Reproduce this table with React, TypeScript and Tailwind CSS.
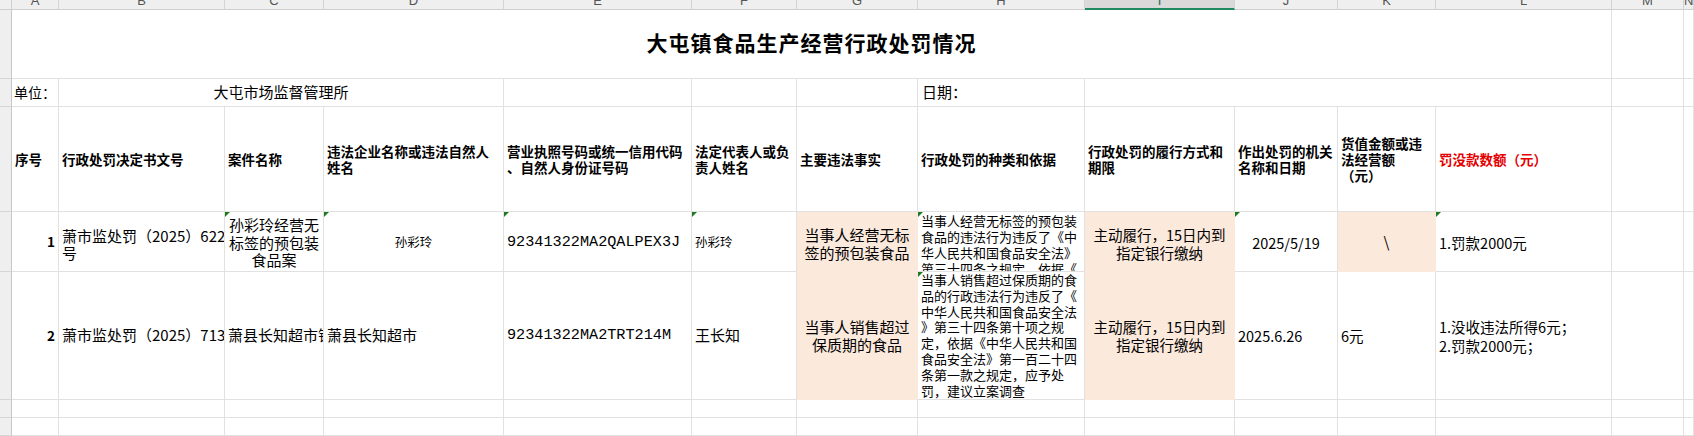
import React from "react";

const LINE = "border-[#e1e1e1]";
const PEACH = "bg-[#fbe9dc] border-[#fbe9dc]";

function Tri() {
  return (
    <span className="absolute left-0 top-0 h-0 w-0 border-r-[5px] border-t-[5px] border-r-transparent border-t-[#1f7a1f]" />
  );
}

function Cell({
  className = "",
  tri = false,
  children,
}: {
  className?: string;
  tri?: boolean;
  children?: React.ReactNode;
}) {
  return (
    <div className={`relative flex overflow-hidden border-b border-r ${LINE} ${className}`}>
      {tri && <Tri />}
      {children}
    </div>
  );
}

function Lines({ lines }: { lines: string[] }) {
  return (
    <div>
      {lines.map((l, i) => (
        <div key={i} className="whitespace-nowrap">
          {l}
        </div>
      ))}
    </div>
  );
}

function RowHead() {
  return <div className="border-b border-r border-b-[#d6d6d6] border-r-[#c8c8c8] bg-[#efefef]" />;
}

const letters = ["A", "B", "C", "D", "E", "F", "G", "H", "I", "J", "K", "L", "M", "N"];

function Th({ lines, red = false }: { lines: string[]; red?: boolean }) {
  return (
    <Cell className={`items-center pl-[3px] text-[13.5px] font-bold leading-4 ${red ? "text-[#e50000]" : "text-black"}`}>
      <Lines lines={lines} />
    </Cell>
  );
}

export default function App() {
  return (
    <div className="h-[436px] w-[1694px] overflow-hidden bg-white font-['Noto_Sans_CJK_SC',sans-serif] text-black">
      <div className="grid grid-cols-[12px_47px_166px_99px_180px_188px_105px_121px_167px_150px_103px_98px_176px_72px_10px] grid-rows-[10px_69px_28px_105px_60px_128px_18px_18px]">
        {/* column letters */}
        <div className="border-b border-r border-b-[#cfcfcf] border-r-[#cfcfcf] bg-[#efefef]" />
        {letters.map((l) => (
          <div
            key={l}
            className={`relative overflow-hidden border-r border-r-[#d4d4d4] ${
              l === "I" ? "border-b-2 border-b-[#1f8a5e] bg-[#d9d9d9] text-[#1f6e4c]" : "border-b border-b-[#cfcfcf] bg-[#efefef] text-[#555]"
            }`}
          >
            <div className="-mt-[6px] text-center font-['Liberation_Sans',sans-serif] text-[13px] leading-[13px]">{l}</div>
          </div>
        ))}

        {/* row 1: title */}
        <RowHead />
        <Cell className="col-span-12 items-center justify-center pb-[2px] text-[21px] font-bold tracking-[1px]">
          大屯镇食品生产经营行政处罚情况
        </Cell>
        <Cell />
        <Cell />

        {/* row 2 */}
        <RowHead />
        <Cell className="items-center whitespace-nowrap pl-[2px] text-[14px]">单位：</Cell>
        <Cell className="col-span-3 items-center justify-center text-[15px]">大屯市场监督管理所</Cell>
        <Cell />
        <Cell />
        <Cell />
        <Cell className="items-center pl-[4px] text-[15px]">日期：</Cell>
        <Cell className="col-span-4" />
        <Cell />
        <Cell />

        {/* row 3: headers */}
        <RowHead />
        <Th lines={["序号"]} />
        <Th lines={["行政处罚决定书文号"]} />
        <Th lines={["案件名称"]} />
        <Th lines={["违法企业名称或违法自然人", "姓名"]} />
        <Th lines={["营业执照号码或统一信用代码", "、自然人身份证号码"]} />
        <Th lines={["法定代表人或负", "责人姓名"]} />
        <Th lines={["主要违法事实"]} />
        <Th lines={["行政处罚的种类和依据"]} />
        <Th lines={["行政处罚的履行方式和", "期限"]} />
        <Th lines={["作出处罚的机关", "名称和日期"]} />
        <Th lines={["货值金额或违", "法经营额", "（元）"]} />
        <Th lines={["罚没款数额（元）"]} red />
        <Cell />
        <Cell />

        {/* row 4 */}
        <RowHead />
        <Cell className="items-center justify-end pr-[3px] text-[13.5px] font-bold">1</Cell>
        <Cell className="items-center pl-[3px] pt-[4px] text-[15px] leading-[17px]">
          <Lines lines={["萧市监处罚（2025）622", "号"]} />
        </Cell>
        <Cell tri className="items-center justify-center pt-[2px] text-center text-[15px] leading-[17.5px]">
          <Lines lines={["孙彩玲经营无", "标签的预包装", "食品案"]} />
        </Cell>
        <Cell tri className="items-center justify-center pt-[2px] text-[12.5px]">孙彩玲</Cell>
        <Cell tri className="items-center pl-[3px] pt-[2px] font-['Liberation_Mono','Noto_Sans_CJK_SC',monospace] text-[15.2px]">
          92341322MA2QALPEX3J
        </Cell>
        <Cell tri className="items-center pl-[3px] pt-[2px] text-[12.5px]">孙彩玲</Cell>
        <Cell className={`items-center justify-center pt-[4px] text-center text-[15px] leading-[18px] ${PEACH}`}>
          <Lines lines={["当事人经营无标", "签的预包装食品"]} />
        </Cell>
        <Cell tri className="items-start pl-[3px] pt-[1px] text-[13px] leading-[16px]">
          <Lines
            lines={[
              "当事人经营无标签的预包装",
              "食品的违法行为违反了《中",
              "华人民共和国食品安全法》",
              "第三十四条之规定，依据《",
            ]}
          />
        </Cell>
        <Cell className={`items-center justify-center pt-[4px] text-center text-[14.5px] leading-[18px] ${PEACH}`}>
          <Lines lines={["主动履行，15日内到", "指定银行缴纳"]} />
        </Cell>
        <Cell tri className="items-center justify-center pt-[2px] text-[14.5px]">
          2025/5/19
        </Cell>
        <Cell className={`items-center justify-center pt-[2px] text-[15px] ${PEACH}`}>\</Cell>
        <Cell tri className="items-center pl-[3px] pt-[2px] text-[14.5px]">1.罚款2000元</Cell>
        <Cell />
        <Cell />

        {/* row 5 */}
        <RowHead />
        <Cell className="items-center justify-end pr-[3px] text-[13.5px] font-bold">2</Cell>
        <Cell className="items-center pl-[3px] text-[15px]">
          <span className="whitespace-nowrap">萧市监处罚（2025）713号</span>
        </Cell>
        <Cell className="items-center pl-[3px] text-[15px]">
          <span className="whitespace-nowrap">萧县长知超市销售超过保质期的食品案</span>
        </Cell>
        <Cell className="items-center pl-[3px] text-[15px]">萧县长知超市</Cell>
        <Cell className="items-center pl-[3px] font-['Liberation_Mono','Noto_Sans_CJK_SC',monospace] text-[15.2px]">
          92341322MA2TRT214M
        </Cell>
        <Cell className="items-center pl-[3px] text-[15px]">王长知</Cell>
        <Cell className={`items-center justify-center text-center text-[15px] leading-[18px] ${PEACH}`}>
          <Lines lines={["当事人销售超过", "保质期的食品"]} />
        </Cell>
        <Cell tri className="items-start pl-[3px] text-[13px] leading-[15.8px]">
          <Lines
            lines={[
              "当事人销售超过保质期的食",
              "品的行政违法行为违反了《",
              "中华人民共和国食品安全法",
              "》第三十四条第十项之规",
              "定，依据《中华人民共和国",
              "食品安全法》第一百二十四",
              "条第一款之规定，应予处",
              "罚，建议立案调查",
            ]}
          />
        </Cell>
        <Cell className={`items-center justify-center text-center text-[14.5px] leading-[18px] ${PEACH}`}>
          <Lines lines={["主动履行，15日内到", "指定银行缴纳"]} />
        </Cell>
        <Cell className="items-center pl-[3px] text-[14.5px]">
          2025.6.26
        </Cell>
        <Cell className="items-center pl-[3px] text-[14.5px]">6元</Cell>
        <Cell className="items-center pl-[3px] text-[14.5px] leading-[19px]">
          <Lines lines={["1.没收违法所得6元；", "2.罚款2000元；"]} />
        </Cell>
        <Cell />
        <Cell />

        {/* rows 6-7 */}
        {[6, 7].map((r) => (
          <React.Fragment key={r}>
            <RowHead />
            {letters.map((l) => (
              <Cell key={l} />
            ))}
          </React.Fragment>
        ))}
      </div>
    </div>
  );
}
